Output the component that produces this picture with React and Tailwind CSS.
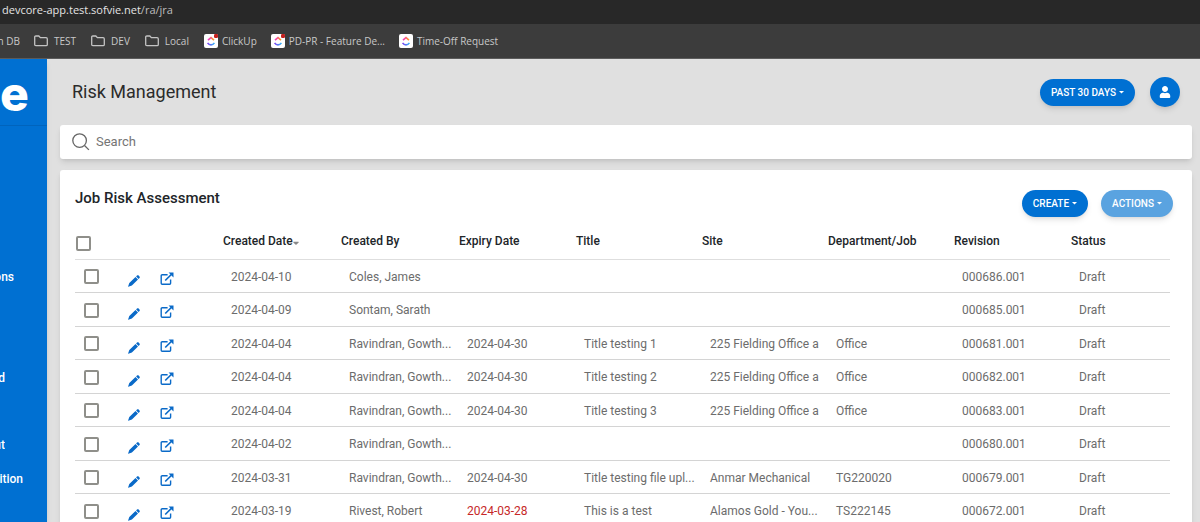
import { useState } from "react";
import { FaCaretDown, FaUser } from "react-icons/fa";

const bookmarks = [
  { label: "TEST", icon: "folder" },
  { label: "DEV", icon: "folder" },
  { label: "Local", icon: "folder" },
  { label: "ClickUp", icon: "clickup", alert: true },
  { label: "PD-PR - Feature De...", icon: "clickup", alert: true },
  { label: "Time-Off Request", icon: "clickup" },
];

const columns = ["Created By", "Expiry Date", "Title", "Site", "Department/Job", "Revision", "Status"];

const rows = [
  { date: "2024-04-10", by: "Coles, James", expiry: "", title: "", site: "", dept: "", revision: "000686.001" },
  { date: "2024-04-09", by: "Sontam, Sarath", expiry: "", title: "", site: "", dept: "", revision: "000685.001" },
  { date: "2024-04-04", by: "Ravindran, Gowth...", expiry: "2024-04-30", title: "Title testing 1", site: "225 Fielding Office a", dept: "Office", revision: "000681.001" },
  { date: "2024-04-04", by: "Ravindran, Gowth...", expiry: "2024-04-30", title: "Title testing 2", site: "225 Fielding Office a", dept: "Office", revision: "000682.001" },
  { date: "2024-04-04", by: "Ravindran, Gowth...", expiry: "2024-04-30", title: "Title testing 3", site: "225 Fielding Office a", dept: "Office", revision: "000683.001" },
  { date: "2024-04-02", by: "Ravindran, Gowth...", expiry: "", title: "", site: "", dept: "", revision: "000680.001" },
  { date: "2024-03-31", by: "Ravindran, Gowth...", expiry: "2024-04-30", title: "Title testing file upl...", site: "Anmar Mechanical", dept: "TG220020", revision: "000679.001" },
  { date: "2024-03-19", by: "Rivest, Robert", expiry: "2024-03-28", overdue: true, title: "This is a test", site: "Alamos Gold - You...", dept: "TS222145", revision: "000672.001" },
];

const FolderIcon = () => (
  <svg viewBox="0 0 14 12" className="h-3 w-3.5" fill="none" stroke="#c4c4c4" strokeWidth="1.3">
    <path d="M.7 2.2c0-.8.4-1.2 1.2-1.2h2.9l1.6 1.7h5.7c.8 0 1.2.4 1.2 1.2v5.6c0 .8-.4 1.2-1.2 1.2H1.9c-.8 0-1.2-.4-1.2-1.2z" />
  </svg>
);

const ClickUpIcon = ({ alert }) => (
  <svg viewBox="0 0 14 14" className="h-3.5 w-3.5">
    <defs>
      <linearGradient id="cuTop" x1="0" x2="1">
        <stop offset="0" stopColor="#f12fd0" />
        <stop offset="1" stopColor="#ffa01c" />
      </linearGradient>
      <linearGradient id="cuBottom" x1="0" x2="1">
        <stop offset="0" stopColor="#7b3ff2" />
        <stop offset="1" stopColor="#35b4f5" />
      </linearGradient>
    </defs>
    <rect width="14" height="14" rx="2" fill="#fff" />
    <path d="M4 6.2 7 3.6l3 2.6" fill="none" stroke="url(#cuTop)" strokeWidth="1.6" />
    <path d="M3.6 8.9c1.7 2.6 5.1 2.6 6.8 0" fill="none" stroke="url(#cuBottom)" strokeWidth="1.6" />
    {alert && <rect x="10" y="0" width="4" height="4" rx="1.2" fill="#c5221f" />}
  </svg>
);

const SearchIcon = () => (
  <svg viewBox="0 0 18 18" className="h-[18px] w-[18px]" fill="none" stroke="#666" strokeWidth="1.3">
    <circle cx="7.6" cy="7.6" r="6.8" />
    <path d="m12.5 12.5 4.4 4.4" />
  </svg>
);

const PencilIcon = () => (
  <svg viewBox="0 0 12 12" className="h-3 w-3" fill="currentColor">
    <path d="M7.5 2 10 4.5 3.9 10.5.3 11.8c-.2 0-.3-.1-.2-.3l1.2-3.6z" />
    <path d="M8.1 1.4 9 .5c.5-.5 1.1-.5 1.6 0l.9.9c.5.5.5 1.1 0 1.6l-.9.9z" />
  </svg>
);

const OpenIcon = () => (
  <svg viewBox="0 0 14 14" className="h-3.5 w-3.5" fill="none" stroke="currentColor" strokeWidth="1.4">
    <path d="M7.6 2.8H2.2c-.6 0-1 .4-1 1v7.4c0 .6.4 1 1 1h7.4c.6 0 1-.4 1-1V7.6" />
    <path d="M5.2 8.5 11.8 2" strokeWidth="1.7" />
    <path d="M8.6.6h4.9v4.9z" fill="currentColor" stroke="none" />
  </svg>
);

const Checkbox = ({ label, checked, onChange }) => (
  <input
    type="checkbox"
    aria-label={label}
    checked={checked}
    onChange={onChange}
    className="block h-[15px] w-[15px] appearance-none rounded-[2px] border-2 border-[#8f8f8a] bg-white checked:bg-[#0070d2]"
  />
);

const PillButton = ({ children, disabled }) => (
  <button
    type="button"
    disabled={disabled}
    className="flex h-[27px] items-center gap-[3px] rounded-full bg-[#0070d2] px-[11px] text-[10px] font-medium text-white shadow-md disabled:bg-[#5aa3e0]"
  >
    {children}
    <svg viewBox="0 0 5 3" className="h-[3px] w-[5px]" fill="currentColor">
      <path d="M0 0h5L2.5 2.6z" />
    </svg>
  </button>
);

const BrowserBar = () => (
  <header className="font-['Open_Sans','Noto_Sans',sans-serif] text-[#c8c8c8]">
    <div className="flex h-6 items-center bg-[#282828] pb-1 pl-0.5 text-[11px] text-[#e4e4e4]">
      devcore-app.test.sofvie.net<span className="text-[#bdbdbd]">/ra/jra</span>
    </div>
    <div className="flex h-[35px] items-center gap-3.5 border-b border-[#5c5c5c] bg-[#3c3c3c] text-[10px]">
      <a href="#db" className="flex w-5 justify-end overflow-hidden whitespace-nowrap">h DB</a>
      {bookmarks.map((b) => (
        <a
          key={b.label}
          href="#bookmark"
          className={`flex items-center whitespace-nowrap ${b.icon === "folder" ? "gap-1.5 pr-px" : "gap-1"}`}
        >
          {b.icon === "folder" ? <FolderIcon /> : <ClickUpIcon alert={b.alert} />}
          {b.label}
        </a>
      ))}
    </div>
  </header>
);

const Sidebar = () => (
  <aside className="w-[47px] shrink-0 bg-[#0070d2] text-xs font-medium text-white shadow-md">
    <div className="flex h-[67px] items-center overflow-hidden border-b border-[#0064bd] pt-1 font-['Inter',sans-serif] text-5xl font-extrabold">
      e
    </div>
    <nav className="flex flex-col pt-[134px] leading-[34px]">
      <a href="#item-1" className="flex w-3.5 justify-end overflow-hidden">ons</a>
      <a href="#item-2" className="mt-[67px] flex w-[5px] justify-end overflow-hidden">d</a>
      <a href="#item-3" className="mt-[33px] flex w-[5px] justify-end overflow-hidden">ut</a>
      <a href="#item-4" className="flex w-[23px] justify-end overflow-hidden">ition</a>
    </nav>
  </aside>
);

const RiskTable = () => {
  const [selected, setSelected] = useState([]);

  const toggle = (revision) =>
    setSelected((prev) =>
      prev.includes(revision) ? prev.filter((r) => r !== revision) : [...prev, revision]
    );

  const toggleAll = () =>
    setSelected((prev) => (prev.length === rows.length ? [] : rows.map((r) => r.revision)));

  return (
    <table className="w-full table-fixed text-left text-xs whitespace-nowrap text-[#6c6c6c]">
      <colgroup>
        <col className="w-[42px]" />
        <col className="w-[105px]" />
        <col className="w-[118px]" />
        <col className="w-[118px]" />
        <col className="w-[117px]" />
        <col className="w-[126px]" />
        <col className="w-[126px]" />
        <col className="w-[126px]" />
        <col className="w-[117px]" />
        <col />
      </colgroup>
      <thead>
        <tr className="h-[35px] border-b border-[#dedede] text-[#212529]">
          <th className="pt-1 pl-px">
            <Checkbox label="Select all" checked={selected.length === rows.length} onChange={toggleAll} />
          </th>
          <th></th>
          <th className="pl-px font-medium">
            <button type="button" className="flex items-center">
              Created Date
              <FaCaretDown className="mt-1 h-3 w-1.5 text-[#888]" />
            </button>
          </th>
          {columns.map((c) => (
            <th key={c} className="pl-px font-medium">{c}</th>
          ))}
        </tr>
      </thead>
      <tbody>
        {rows.map((row) => (
          <tr key={row.revision} className="border-b border-[#d4d4d4] odd:h-[33px] even:h-[34px] *:pt-0.5">
            <td className="pl-[9px]">
              <Checkbox
                label={`Select ${row.revision}`}
                checked={selected.includes(row.revision)}
                onChange={() => toggle(row.revision)}
              />
            </td>
            <td className="pl-[11px]">
              <div className="flex items-end gap-5 pt-[5px] text-[#0a6ac8]">
                <button type="button" aria-label="Edit">
                  <PencilIcon />
                </button>
                <button type="button" aria-label="Open" className="pb-px">
                  <OpenIcon />
                </button>
              </div>
            </td>
            <td className="pl-[9px]">{row.date}</td>
            <td className="pl-[9px]">{row.by}</td>
            <td className={row.overdue ? "pl-[9px] text-[#c62828]" : "pl-[9px]"}>{row.expiry}</td>
            <td className="pl-[9px]">{row.title}</td>
            <td className="pl-[9px]">{row.site}</td>
            <td className="pl-[9px]">{row.dept}</td>
            <td className="pl-[9px]">{row.revision}</td>
            <td className="pl-[9px]">Draft</td>
          </tr>
        ))}
      </tbody>
    </table>
  );
};

const App = () => (
  <div className="flex h-screen flex-col overflow-hidden bg-[#e0e0e0] font-['Roboto',sans-serif]">
    <BrowserBar />
    <div className="flex min-h-0 flex-1">
      <Sidebar />
      <main className="min-w-0 flex-1 pr-2 pl-[13px]">
        <div className="flex h-[66px] items-center justify-between pr-3 pl-3">
          <h1 className="text-lg text-[#2b2b2b]">Risk Management</h1>
          <div className="flex items-center gap-[15px]">
            <PillButton>PAST 30 DAYS</PillButton>
            <button
              type="button"
              aria-label="Account"
              className="flex h-[30px] w-[30px] items-center justify-center rounded-full bg-[#0070d2] text-white shadow-md"
            >
              <FaUser className="h-3 w-3" />
            </button>
          </div>
        </div>

        <label className="flex h-[34px] items-center gap-1.5 rounded-[3px] bg-white px-3 shadow-md">
          <SearchIcon />
          <input
            type="search"
            aria-label="Search"
            placeholder="Search"
            className="min-w-0 flex-1 text-[13px] outline-none placeholder:text-[#757575]"
          />
        </label>

        <section className="mt-[11px] rounded-[3px] bg-white pr-[22px] pl-[15px] shadow-md">
          <div className="flex h-[54px] items-start justify-between pt-5">
            <h2 className="text-[15px] leading-4 font-medium text-[#212529]">Job Risk Assessment</h2>
            <div className="-mr-[3px] flex gap-[13px]">
              <PillButton>CREATE</PillButton>
              <PillButton disabled>ACTIONS</PillButton>
            </div>
          </div>
          <RiskTable />
        </section>
      </main>
    </div>
  </div>
);

export default App;
